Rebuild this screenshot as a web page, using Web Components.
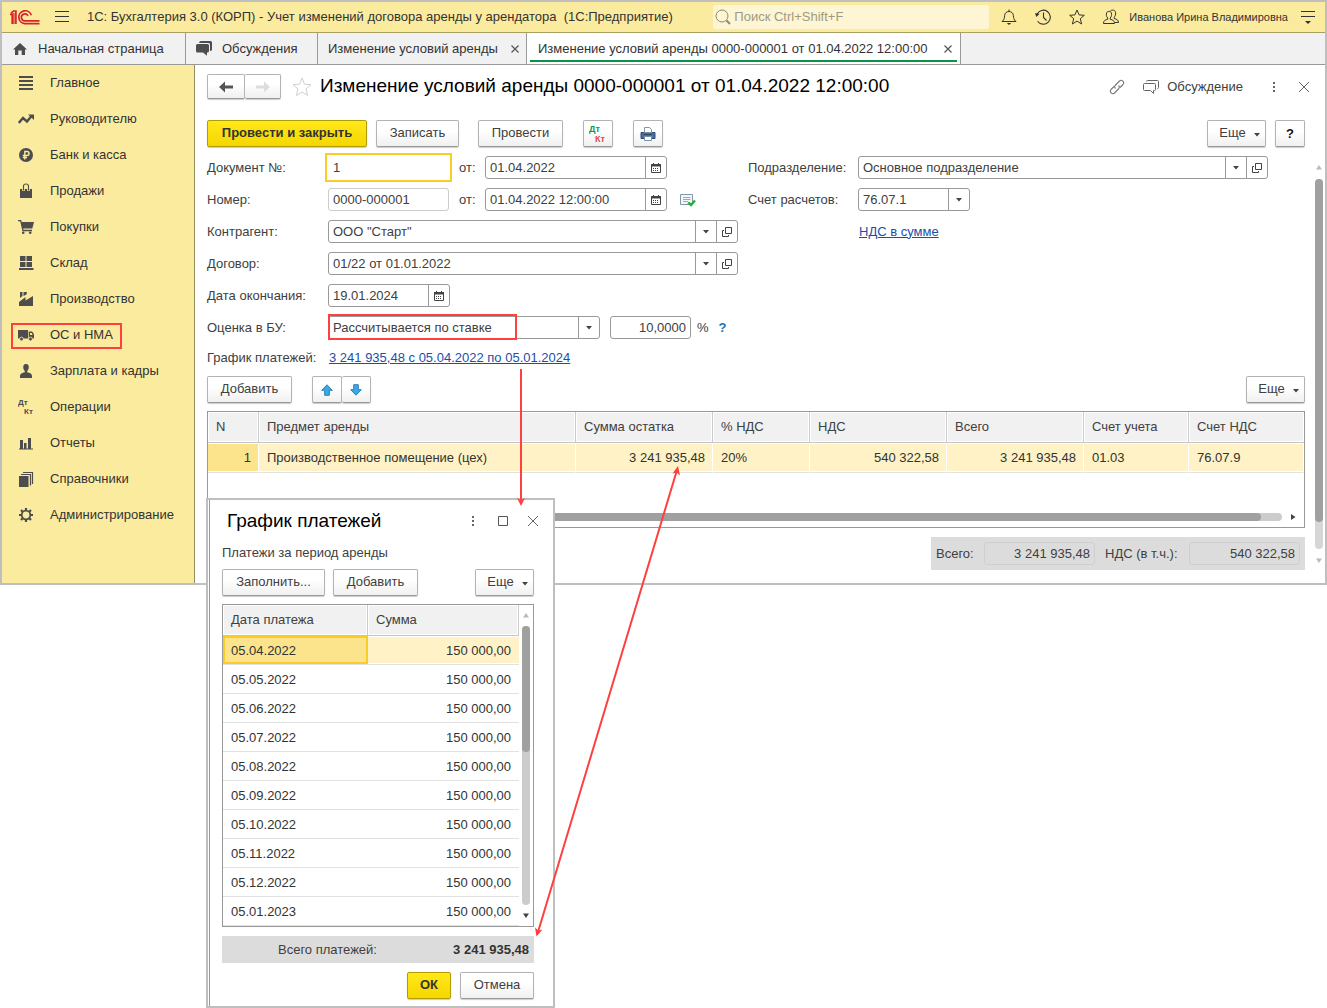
<!DOCTYPE html>
<html lang="ru">
<head>
<meta charset="utf-8">
<title>1С: Бухгалтерия 3.0 (КОРП)</title>
<style>
  body { margin: 0; min-height: 100vh; background: #fff; color: #404040; font: 13px/18px "Liberation Sans", Arial, sans-serif; position: relative; }
</style>
</head>
<body>
<app-window>
  <title-bar slot="title"></title-bar>
  <tab-strip slot="tabs">
    <app-tab style="--w:184px" icon="home">Начальная страница</app-tab>
    <app-tab style="--w:132px" icon="chats">Обсуждения</app-tab>
    <app-tab style="--w:209px" closable>Изменение условий аренды</app-tab>
    <app-tab style="--w:434px" closable active>Изменение условий аренды 0000-000001 от 01.04.2022 12:00:00</app-tab>
  </tab-strip>
  <side-nav slot="nav">
    <nav-item icon="lines">Главное</nav-item>
    <nav-item icon="trend">Руководителю</nav-item>
    <nav-item icon="ruble">Банк и касса</nav-item>
    <nav-item icon="bag">Продажи</nav-item>
    <nav-item icon="cart">Покупки</nav-item>
    <nav-item icon="store">Склад</nav-item>
    <nav-item icon="factory">Производство</nav-item>
    <nav-item icon="truck" marked>ОС и НМА</nav-item>
    <nav-item icon="person">Зарплата и кадры</nav-item>
    <nav-item icon="dtkt">Операции</nav-item>
    <nav-item icon="bars">Отчеты</nav-item>
    <nav-item icon="books">Справочники</nav-item>
    <nav-item icon="gear">Администрирование</nav-item>
  </side-nav>
  <lease-document></lease-document>
</app-window>
<payments-dialog></payments-dialog>
<callout-arrows></callout-arrows>

<script>
const D = '#4d4d4d';
const ICONS = {
  logo: [30, 15, `<g fill="none" stroke="#d8232a" stroke-width="1.7"><path d="M0 4.4H2.2V14M1 3.2L3.6 1H5.9V14" /><path d="M3.9 3V14" stroke-width="1.3"/><path d="M21.3 5.2A6.4 6.4 0 1 0 14.8 13.6H29.5"/><path d="M18 5.8A3.5 3.5 0 1 0 14.8 10.9H29.5"/></g>`],
  menu: [16, 16, `<path d="M1 2.5H15M1 7.5H15M1 12.5H15" stroke="#333" fill="none"/>`],
  search: [16, 16, `<g fill="none" stroke="#8f8a6c"><circle cx="7" cy="7" r="6"/><path d="M11.5 11.5L15 15" stroke-width="2"/></g>`],
  bell: [16, 16, `<path d="M1 12.5H15C12.6 10.6 12.6 9 12.4 6.6C12.2 4 10.4 2.5 8 2.5S3.8 4 3.6 6.6C3.4 9 3.4 10.6 1 12.5ZM8 .5V2.5" fill="none" stroke="#333"/><path d="M5.8 14H10.2L8 16Z" fill="#333"/>`],
  history: [16, 16, `<g fill="none" stroke="#333" stroke-width="1.1"><path d="M2 5.2A7 7 0 1 1 2.6 12.2M8.5 3.5V8.5L11.5 11.5"/></g><path d="M0 4.2L4.6 4.8 1.4 8Z" fill="#333"/>`],
  star: [16, 16, `<path d="M8 1L10.1 5.9L15.3 6.3L11.3 9.7L12.6 15L8 12.1L3.4 15L4.7 9.7L.7 6.3L5.9 5.9Z" fill="none" stroke="#333"/>`],
  starlight: [20, 20, `<path d="M10 1L12.5 7.2L19 7.7L14 11.9L15.6 18.5L10 15L4.4 18.5L6 11.9L1 7.7L7.5 7.2Z" fill="none" stroke="#d0d0d0"/>`],
  users: [16, 16, `<g fill="none" stroke="#333"><path d="M.5 14.5C.5 11.5 2 11 4.7 10.3V9C3 7 3.2 5.5 3.6 4C4.2 1.8 8 1.8 8.4 4C8.8 6 8.6 7.5 7.2 9V10.3C10 11 11.3 11.5 11.5 14.5Z"/><path d="M7.5 1.9C9.2.4 12.4 1 12.6 3.6C12.8 5.6 12.3 7 11.2 8.2V9.5C14 10.3 15.3 11 15.5 13.5H12"/></g>`],
  settings: [16, 16, `<path d="M1 2.5H15M1 7.5H15" stroke="#333"/><path d="M5 12H11L8 15Z" fill="#333"/>`],
  home: [16, 12, `<path d="M8 0L15 6.5H13V12H9.700V7.500H6.300V12H3V6.500H1Z" fill="${D}"/>`],
  chats: [16, 15, `<path d="M5 0H14.5Q16 0 16 1.5V8.5Q16 10 14 10V3.5Q14 2 12.5 2H3Q3.2 0 5 0Z" fill="${D}"/><path d="M1.5 3H11.5Q13 3 13 4.5V10Q13 11.5 11 11.5V14.8L7 11.5H1.5Q0 11.5 0 10V4.5Q0 3 1.5 3Z" fill="${D}"/>`],
  close: [8, 8, `<path d="M.5 .5L7.5 7.5M7.5 .5L.5 7.5" stroke="#555" stroke-width="1.2"/>`],
  x: [16, 16, `<path d="M3 3L13 13M13 3L3 13" stroke="#666"/>`],
  dots: [16, 16, `<path d="M7 3H9V5H7ZM7 7H9V9H7ZM7 11H9V13H7Z" fill="#666"/>`],
  max: [16, 16, `<path d="M3.5 3.5H12.5V12.5H3.5Z" fill="none" stroke="#555"/>`],
  link: [16, 16, `<g fill="none" stroke="#777" stroke-width="1.1"><path d="M6.5 9.500C5.200 8.300 5.500 7 6.500 6L10.500 2C12.800 0 16 3.200 14 5.500L11 8.500"/><path d="M9.500 6.500C10.800 7.700 10.500 9 9.500 10L5.500 14C3.200 16 0 12.800 2 10.500L5 7.500"/></g>`],
  discuss: [16, 16, `<g fill="none" stroke="#666"><path d="M1.5 4.5H11.5Q12.5 4.5 12.5 5.5V10.5Q12.5 11.5 11.5 11.5H10.5V14.5L7.5 11.5H1.5Q.5 11.5 .5 10.5V5.5Q.5 4.5 1.5 4.5Z"/><path d="M3.5 2.5Q3.5 1.5 4.5 1.5H14.5Q15.5 1.5 15.5 2.5V8.5Q15.5 9.5 14.5 9.5"/></g>`],
  back: [16, 12, `<path d="M1 6L7 .5V4.5H15V7.5H7V11.5Z" fill="#555"/>`],
  fwd: [16, 12, `<path d="M15 6L9 .5V4.5H1V7.5H9V11.5Z" fill="#ddd"/>`],
  lines: [16, 16, `<path d="M1 2H15M1 6H15M1 10H15M1 14H15" stroke="${D}" stroke-width="2"/>`],
  trend: [16, 16, `<path d="M.8 12L5 7L9 10.5L13.5 5" fill="none" stroke="${D}" stroke-width="2.4"/><path d="M10 3.5H16V9Z" fill="${D}"/>`],
  ruble: [16, 16, `<circle cx="8" cy="8" r="7" fill="${D}"/><path d="M6.8 12.5V4.5H9Q11 4.5 11 6.5T9 8.5H4.8M4.8 10.5H9" fill="none" stroke="#fbeb9e" stroke-width="1.4"/>`],
  bag: [16, 16, `<path d="M2 6H14V15H2Z" fill="${D}"/><path d="M5.5 8V3Q5.5 1 8 1T10.5 3V8" fill="none" stroke="#fbeb9e" stroke-width="2.6"/><path d="M5.5 7.5V3Q5.5 1 8 1T10.5 3V7.5" fill="none" stroke="${D}" stroke-width="1.1"/>`],
  cart: [16, 16, `<path d="M3 3H16L14.3 9.5H4.6Z" fill="${D}"/><path d="M0 1.6H2.7L5 11.5H14" fill="none" stroke="${D}" stroke-width="1.3"/><circle cx="5.2" cy="13.8" r="1.3" fill="${D}"/><circle cx="12.2" cy="13.8" r="1.3" fill="${D}"/>`],
  store: [16, 16, `<path d="M2 1H7.5V6H2ZM8.5 1H14V6H8.5ZM2 7H7.5V12H2ZM8.5 7H14V12H8.5ZM1 13H15.500V15H1Z" fill="${D}"/>`],
  factory: [16, 16, `<path d="M1 15V11L7.500 6V9.500L15 5V15Z" fill="${D}"/><path d="M2 1H4.500V5L2 7ZM5.500 1H9L8.500 3.500L5.500 5Z" fill="${D}"/>`],
  truck: [16, 16, `<path d="M0 3H10V11.500H0ZM10.700 4.500H14Q16 6 16 8V11.500H10.700Z" fill="${D}"/><path d="M12 6H13.700L14.600 8H12Z" fill="#fbeb9e"/><g fill="${D}" stroke="#fbeb9e" stroke-width=".8"><circle cx="3.500" cy="12" r="1.900"/><circle cx="12.500" cy="12" r="1.900"/></g>`],
  person: [16, 16, `<path d="M8 1C5.600 1 5 3 5.300 5C5.500 6.500 6.300 7.500 6.800 8V9.200C4 10 2 10.500 2 13V15H14V13C14 10.500 12 10 9.200 9.200V8C9.700 7.500 10.500 6.500 10.700 5C11 3 10.400 1 8 1Z" fill="${D}"/>`],
  dtkt: [16, 20, `<g font-family="Liberation Sans, sans-serif" font-weight="700" font-size="8" fill="${D}"><text x="0" y="8">Дт</text><text x="6" y="17">Кт</text></g>`],
  dtktc: [18, 21, `<g font-family="Liberation Sans, sans-serif" font-weight="700" font-size="9"><text x="0" y="9" fill="#16914a">Дт</text><text x="6" y="19" fill="#dd4b4b">Кт</text></g>`],
  bars: [16, 16, `<path d="M1 13.500H15V14.500H1ZM2 5H5V13.500H2ZM6 8H8.500V13.500H6ZM10 3H13V13.500H10Z" fill="${D}"/>`],
  books: [16, 16, `<path d="M1 5H10.500V16H1Z" fill="${D}"/><path d="M3 3.500H12.500V14.500M5 1.500H14.500V13" fill="none" stroke="${D}" stroke-width="1.200"/>`],
  gear: [16, 16, `<circle cx="8" cy="8" r="4.300" fill="none" stroke="${D}" stroke-width="1.800"/><path d="M8 1V4M8 12V15M1 8H4M12 8H15M3 3L5.200 5.200M10.800 10.800L13 13M13 3L10.800 5.200M5.200 10.800L3 13" stroke="${D}" stroke-width="2.200"/>`],
  print: [16, 16, `<path d="M1 6.500H15V12.500H1Z" fill="#4a6f97" stroke="#2f4f74"/><path d="M4.500 6.500V1.500H9.500L11.500 3.500V6.500Z" fill="#fff" stroke="#8095ad"/><path d="M4 8.500H12" stroke="#2b4868"/><path d="M4.500 10.500H11.500V14.500H4.500Z" fill="#fff" stroke="#7b93b0"/>`],
  up: [12, 12, `<path d="M6 .8L11.300 6.300H8.300V11.300H3.700V6.300H.7Z" fill="#38a9e6" stroke="#2b7fb5"/>`],
  down: [12, 12, `<path d="M6 11.200L11.300 5.700H8.300V.7H3.700V5.700H.7Z" fill="#38a9e6" stroke="#2b7fb5"/>`],
  cal: [10, 10, `<path d="M.5 1.500H9.500V9.500H.5Z" fill="#fff" stroke="#444"/><path d="M0 1H10V3.500H0Z" fill="#444"/><path d="M2.500 0V2M7.500 0V2" stroke="#444"/><path d="M2 5.500H8M2 7.500H8" stroke="#444" stroke-dasharray="1 1"/>`],
  caret: [6, 4, `<path d="M0 0H6L3 3.500Z" fill="#444"/>`],
  open: [10, 10, `<path d="M3.500 .500H9.500V6.500H3.500Z" fill="none" stroke="#444"/><path d="M2 3.500H.5V9.500H6.500V8" fill="none" stroke="#444"/>`],
  posted: [16, 14, `<path d="M.500 1.500H12.500V11.500H.500Z" fill="#f4f7fa" stroke="#8296ab"/><path d="M3 4.500H10.500M3 6.500H10.500M3 8.500H8" stroke="#9aaabb"/><path d="M8.200 9.500L11 12L15 7.500" fill="none" stroke="#27b13b" stroke-width="2.400"/>`],
  sup: [6, 5, `<path d="M3 0L6 4.500H0Z" fill="#bbb"/>`],
  sdown: [6, 5, `<path d="M3 5L6 .500H0Z" fill="var(--arrow,#bbb)"/>`],
  sright: [5, 6, `<path d="M0 0L4.500 3L0 6Z" fill="#444"/>`]
};
const icon = n => { const [w, h, b] = ICONS[n]; return `<svg class="ic" width="${w}" height="${h}" viewBox="0 0 ${w} ${h}" aria-hidden="true">${b}</svg>`; };
const BASE = `:host,*{box-sizing:border-box}svg{display:block;flex:none}button,input,select{font:inherit;color:inherit;margin:0}button{cursor:pointer}button.bare{border:0;background:none;padding:0;display:flex;align-items:center}a{color:#1a4fa8}`;

function define(name, css, html) {
  customElements.define(name, class extends HTMLElement {
    constructor() { super(); this.attachShadow({ mode: 'open' }); }
    connectedCallback() {
      this.shadowRoot.innerHTML = `<style>${BASE}${css}</style>` + (typeof html === 'function' ? html(this) : html);
    }
  });
}
const attr = (el, n, d = '') => el.getAttribute(n) ?? d;

define('app-window', `
  :host{display:block;border:2px solid #bfbfbf;background:#fff}
  .body{display:flex}
  main{flex:1;min-width:0}
`, `<slot name="title"></slot><slot name="tabs"></slot><div class="body"><slot name="nav"></slot><main><slot></slot></main></div>`);

define('title-bar', `
  :host{display:flex;align-items:center;height:31px;background:#fbeb9e;border-bottom:1px solid #a89f62;padding:0 9px 0 8px;color:#333}
  .burger{margin:0 17px 0 14px}
  .name{flex:1;white-space:pre;overflow:hidden}
  .search{display:flex;align-items:center;gap:3px;width:276px;height:24px;background:#fdf5d3;border-radius:2px;padding-left:2px;margin-right:12px}
  .search input{flex:1;min-width:0;border:0;background:none;padding:0;outline:0}
  .search input::placeholder{color:#a09b80;opacity:1}
  .tools{display:flex;gap:18px;margin-right:10px}
  .user{font-size:11px;margin-right:12px;white-space:nowrap}
`, `${icon('logo')}<button class="bare burger" aria-label="Меню">${icon('menu')}</button>
  <span class="name">1С: Бухгалтерия 3.0 (КОРП) - Учет изменений договора аренды у арендатора  (1С:Предприятие)</span>
  <label class="search">${icon('search')}<input type="search" placeholder="Поиск Ctrl+Shift+F" aria-label="Поиск"></label>
  <div class="tools"><button class="bare" aria-label="Уведомления">${icon('bell')}</button><button class="bare" aria-label="История">${icon('history')}</button><button class="bare" aria-label="Избранное">${icon('star')}</button><button class="bare" aria-label="Пользователи">${icon('users')}</button></div>
  <span class="user">Иванова Ирина Владимировна</span><button class="bare" aria-label="Настройки">${icon('settings')}</button>`);

define('tab-strip', `:host{display:flex;height:32px;background:#f1f1f1;border-bottom:1px solid #999}`, `<slot></slot>`);

define('app-tab', `
  :host{display:flex;width:var(--w);border-right:1px solid #999;padding:0 2px}
  :host([active]){background:#fff}
  .in{flex:1;display:flex;align-items:center;justify-content:space-between;padding:2px 5px 0 8px;white-space:nowrap;margin-bottom:2px}
  :host([active]) .in{border-bottom:2px solid #0a9447;margin:0 1px 2px;padding-top:4px}
  .t{display:flex;align-items:center;gap:10px;border:0;background:none;padding:0;color:#333}
`, el => `<div class="in"><button class="t">${el.hasAttribute('icon') ? icon(attr(el, 'icon')) : ''}<slot></slot></button>${el.hasAttribute('closable') ? `<button class="bare" aria-label="Закрыть вкладку">${icon('close')}</button>` : ''}</div>`);

define('side-nav', `:host{display:block;width:193px;flex:none;background:#fbeb9e;border-right:1px solid #958f60}`, `<nav><slot></slot></nav>`);

define('nav-item', `
  :host{display:block;position:relative}
  a{display:flex;align-items:center;gap:16px;height:36px;padding-left:16px;color:#333;text-decoration:none;white-space:nowrap}
  .mark{position:absolute;left:9px;top:6px;width:111px;height:26px;border:2px solid #ff4040}
`, el => `<a href="#">${icon(attr(el, 'icon'))}<slot></slot></a>${el.hasAttribute('marked') ? '<span class="mark"></span>' : ''}`);

define('tool-button', `
  :host{display:block;flex:none}
  button{display:flex;align-items:center;justify-content:center;gap:8px;height:27px;min-width:var(--w,30px);padding:0 4px 2px;border:1px solid #b3b3b3;border-bottom-color:#999;border-radius:2px;background:linear-gradient(#fff 40%,#f0f0f0);box-shadow:0 1px 1px #ccc;white-space:nowrap;color:#404040}
  :host([icon]) button{padding-bottom:0}
  :host([small]) button{height:25px}
  :host([primary]) button{background:linear-gradient(#ffe81a,#f5d600);border-color:#b39b00;font-weight:700;color:#333}
  :host([menu]) button{padding-left:10px}
  :host([menu]) .caret{margin-top:4px}
  :host([join]) button{border-left:0}
  :host([help]) button{font-weight:700;color:#111;padding-bottom:0}
`, el => `<button ${attr(el, 'name') ? `aria-label="${attr(el, 'name')}"` : ''}>${el.hasAttribute('icon') ? icon(attr(el, 'icon')) : ''}<slot></slot>${el.hasAttribute('menu') ? `<span class="caret">${icon('caret')}</span>` : ''}</button>`);

/* A labelled 1C field: plain text, date with a calendar button, or a drop-down with an optional open button. */
define('form-field', `
  :host{display:flex;align-items:center;height:23px}
  :host([grow]){flex:1}
  label{flex:none;width:var(--lw);white-space:nowrap}
  .box{position:relative;display:flex;height:23px;width:var(--w);border:1px solid #999;border-radius:3px;background:#fff}
  :host([grow]) .box{flex:1;width:auto}
  input,select{flex:1;min-width:0;width:100%;height:21px;border:0;background:none;padding:0 4px;outline:0;appearance:none;color:#404040;border-radius:0}
  :host([num]) input{text-align:right}
  .box>button{width:21px;border:0;border-left:1px solid #999;background:none;padding:0;display:grid;place-items:center}
  .pick{flex:1;display:grid;grid-template-columns:1fr 21px}
  .pick select{grid-area:1/1/2/3}
  .pick span{grid-area:1/2/2/3;border-left:1px solid #999;display:grid;place-items:center;pointer-events:none}
  :host([muted]) .box{border-color:#ccc}
  :host([total]) .box{border-color:#cfcfcf;background:none}
  :host([focus]) .box{border-color:transparent;outline:2px solid #fbcb26;outline-offset:1px;border-radius:0}
  .mark{position:absolute;left:-1px;top:-3px;width:189px;height:26px;border:2px solid #ff4040;pointer-events:none}
`, el => {
  const k = attr(el, 'kind', 'text'), v = attr(el, 'value').replace(/"/g, '&quot;');
  const aria = el.hasAttribute('name') ? `aria-label="${attr(el, 'name')}"` : '';
  return (el.hasAttribute('label') ? `<label for="c">${attr(el, 'label')}</label>` : '') + `<div class="box">` +
    (k === 'select' ? `<div class="pick"><select id="c" ${aria}><option>${v}</option></select><span>${icon('caret')}</span></div>` : `<input id="c" type="text" value="${v}" ${aria} ${el.hasAttribute('muted') || el.hasAttribute('total') ? 'readonly' : ''}>`) +
    (k === 'date' ? `<button aria-label="Выбрать дату">${icon('cal')}</button>` : '') +
    (el.hasAttribute('open') ? `<button aria-label="Открыть">${icon('open')}</button>` : '') +
    (el.hasAttribute('marked') ? '<span class="mark"></span>' : '') + `</div>`;
});

define('scroll-bar', `
  :host{display:flex;flex-direction:column;align-items:center;width:8px;flex:none}
  .track{flex:1;width:8px;border-radius:4px;background:var(--track,#d6d6d6);margin:var(--gap,8px) 0;display:flex;flex-direction:column}
  .thumb{height:var(--thumb);border-radius:4px;background:#a0a0a0}
`, `${icon('sup')}<div class="track"><div class="thumb"></div></div>${icon('sdown')}`);

const GRID = `
  table{border-collapse:separate;border-spacing:0;table-layout:fixed;width:100%;color:#333}
  th,td{padding:0 7px 0 8px;text-align:left;font-weight:400;white-space:nowrap;overflow:hidden}
  th{height:31px;background:#f1f1f1;border-right:1px solid #ccc;border-bottom:1px solid #c4c4c4;box-shadow:inset 0 0 0 1px #fff;color:#404040}
  td{border-bottom:1px solid #e2e2e2}
  th:last-child{border-right:0}
  .r{text-align:right}
  tr.sel td{background:#fef2c6;box-shadow:inset 0 1px #fff,inset 0 -1px #fff}
  tr.sel td:first-child{background:#fbe48c}
`;

define('lease-items', `${GRID}
  :host{display:flex;flex-direction:column;height:117px;border:1px solid #999}
  td{height:30px;border-right:1px solid #fff}
  .hs{margin-top:auto;display:flex;align-items:center;gap:9px;padding:0 8px 6px 12px}
  .track{flex:1;height:8px;border-radius:4px;background:#ccc;padding-right:21px}
  .thumb{height:8px;border-radius:4px;background:#a0a0a0}
`, `<table><colgroup><col style="width:51px"><col><col style="width:137px"><col style="width:97px"><col style="width:137px"><col style="width:137px"><col style="width:105px"><col style="width:115px"></colgroup>
  <thead><tr><th>N</th><th>Предмет аренды</th><th>Сумма остатка</th><th>% НДС</th><th>НДС</th><th>Всего</th><th>Счет учета</th><th>Счет НДС</th></tr></thead>
  <tbody><tr class="sel"><td class="r">1</td><td>Производственное помещение (цех)</td><td class="r">3 241 935,48</td><td>20%</td><td class="r">540 322,58</td><td class="r">3 241 935,48</td><td>01.03</td><td>76.07.9</td></tr></tbody></table>
  <div class="hs"><div class="track"><div class="thumb"></div></div>${icon('sright')}</div>`);

define('lease-document', `
  :host{display:block}
  header{display:flex;align-items:center;height:25px;margin:9px 13px 21px 12px}
  h1{font-size:19px;line-height:24px;font-weight:400;color:#000;margin:0 auto 0 8px;padding-bottom:2px;white-space:nowrap}
  .star{margin-left:11px}
  .bar{display:flex;margin:0 20px 9px 12px}
  .bar .end,.cmd .end{margin-left:auto;display:flex;gap:9px}
  .scroll{display:flex;gap:10px;padding:0 2px 0 12px}
  .content{flex:1;min-width:0;padding-bottom:13px}
  .cols{display:flex;gap:10px}
  .left{flex:none;width:531px;--lw:121px}
  .right{flex:1;padding-right:37px;--lw:110px}
  .left,.right{display:flex;flex-direction:column;gap:9px}
  .row{display:flex;align-items:center;gap:10px;height:23px}
  .from{--lw:26px}
  .nds{padding-left:111px}
  .sched{display:flex;margin:10px 0 9px}
  .sched span{width:122px}
  .cmd{display:flex;margin-bottom:8px}
  .totals{display:flex;gap:10px;width:374px;height:33px;align-items:center;background:#dcdcdc;margin:9px 0 0 auto;padding:0 5px}
  .pct{display:flex;gap:10px;margin-left:-4px}
  button.q{color:#1a72b8;font-weight:700}
  button.disc{gap:8px;margin:0 23px 0 18px}
`, `<header>
    <tool-button small icon="back" name="Назад" style="--w:38px"></tool-button><tool-button small join icon="fwd" name="Вперед" style="--w:36px"></tool-button>
    <button class="bare star" aria-label="В избранное">${icon('starlight')}</button>
    <h1>Изменение условий аренды 0000-000001 от 01.04.2022 12:00:00</h1>
    <button class="bare" aria-label="Ссылка">${icon('link')}</button>
    <button class="bare disc">${icon('discuss')}Обсуждение</button>
    <button class="bare" aria-label="Еще" style="margin-right:14px">${icon('dots')}</button>
    <button class="bare" aria-label="Закрыть">${icon('x')}</button>
  </header>
  <div class="bar">
    <tool-button primary style="--w:160px;margin-right:9px">Провести и закрыть</tool-button>
    <tool-button style="--w:83px;margin-right:19px">Записать</tool-button>
    <tool-button style="--w:85px;margin-right:20px">Провести</tool-button>
    <tool-button icon="dtktc" name="Проводки" style="margin-right:20px"></tool-button>
    <tool-button icon="print" name="Печать"></tool-button>
    <div class="end"><tool-button menu style="--w:59px">Еще</tool-button><tool-button help>?</tool-button></div>
  </div>
  <div class="scroll">
    <div class="content">
      <div class="cols">
        <div class="left">
          <div class="row"><form-field focus label="Документ №:" value="1" style="--w:121px"></form-field><form-field class="from" label="от:" kind="date" value="01.04.2022" style="--w:182px"></form-field></div>
          <div class="row"><form-field muted label="Номер:" value="0000-000001" style="--w:121px"></form-field><form-field class="from" label="от:" kind="date" value="01.04.2022 12:00:00" style="--w:182px"></form-field><span style="margin-left:3px">${icon('posted')}</span></div>
          <form-field label="Контрагент:" kind="select" open value='ООО "Старт"' style="--w:410px"></form-field>
          <form-field label="Договор:" kind="select" open value="01/22 от 01.01.2022" style="--w:410px"></form-field>
          <form-field label="Дата окончания:" kind="date" value="19.01.2024" style="--w:122px"></form-field>
          <div class="row"><form-field label="Оценка в БУ:" kind="select" marked value="Рассчитывается по ставке" style="--w:272px"></form-field><form-field num name="Ставка" value="10,0000" style="--w:81px"></form-field><span class="pct"><span>%</span><button class="bare q">?</button></span></div>
        </div>
        <div class="right">
          <form-field grow label="Подразделение:" kind="select" open value="Основное подразделение" style="flex:none"></form-field>
          <form-field label="Счет расчетов:" kind="select" value="76.07.1" style="--w:112px"></form-field>
          <div class="row nds"><a href="#">НДС в сумме</a></div>
        </div>
      </div>
      <div class="sched"><span>График платежей:</span><a href="#">3 241 935,48 с 05.04.2022 по 05.01.2024</a></div>
      <div class="cmd"><tool-button style="--w:85px;margin-right:20px">Добавить</tool-button><tool-button icon="up" name="Вверх"></tool-button><tool-button join icon="down" name="Вниз" style="--w:29px"></tool-button><div class="end"><tool-button menu style="--w:59px">Еще</tool-button></div></div>
      <lease-items></lease-items>
      <div class="totals"><form-field total num label="Всего:" value="3 241 935,48" style="--lw:48px;--w:111px"></form-field><form-field total num label="НДС (в т.ч.):" value="540 322,58" style="--lw:84px;--w:111px"></form-field></div>
    </div>
    <scroll-bar style="--thumb:343px;--gap:9px;padding:9px 0 20px"></scroll-bar>
  </div>`);

const DATES = ['05.04.2022', '05.05.2022', '05.06.2022', '05.07.2022', '05.08.2022', '05.09.2022', '05.10.2022', '05.11.2022', '05.12.2022', '05.01.2023'];
define('payments-dialog', `${GRID}
  :host{position:absolute;left:206px;top:498px;width:349px;border:2px solid #bfbfbf;background:#fff}
  section{border-left:1px solid #999;margin-left:1px;padding:8px 19px 7px 12px}
  header{display:flex;align-items:center;gap:14px;height:26px;margin:0 -7px 10px 5px}
  h2{font-size:19px;line-height:24px;font-weight:400;color:#000;margin:0 auto 0 0}
  p{margin:0 0 7px}
  .cmd{display:flex;gap:8px;margin-bottom:8px}
  .grid{display:flex;border:1px solid #999}
  .grid scroll-bar{margin:0 3px;padding:8px 0}
  .t{flex:1}
  td{height:29px;padding:2px 8px 0}
  th:last-child{border-right:1px solid #ccc}
  tr.sel td:first-child{box-shadow:inset 0 0 0 2px #fbcb26}
  .sum{display:flex;justify-content:space-between;align-items:center;height:27px;background:#dcdcdc;margin:9px 0;padding:0 5px 0 56px}
  .sum b{color:#333}
  footer{display:flex;justify-content:flex-end;gap:9px}
`, `<section role="dialog" aria-label="График платежей">
  <header><h2>График платежей</h2><button class="bare" aria-label="Еще">${icon('dots')}</button><button class="bare" aria-label="Развернуть">${icon('max')}</button><button class="bare" aria-label="Закрыть">${icon('x')}</button></header>
  <p>Платежи за период аренды</p>
  <div class="cmd"><tool-button style="--w:103px">Заполнить...</tool-button><tool-button style="--w:85px">Добавить</tool-button><tool-button menu style="--w:59px;margin-left:auto">Еще</tool-button></div>
  <div class="grid"><div class="t"><table><colgroup><col style="width:145px"><col></colgroup><thead><tr><th>Дата платежа</th><th>Сумма</th></tr></thead><tbody>${DATES.map((d, i) => `<tr${i ? '' : ' class="sel"'}><td>${d}</td><td class="r">150 000,00</td></tr>`).join('')}</tbody></table></div><scroll-bar style="--thumb:126px;--track:#ccc;--arrow:#444"></scroll-bar></div>
  <div class="sum"><span>Всего платежей:</span><b>3 241 935,48</b></div>
  <footer><tool-button primary style="--w:44px">ОК</tool-button><tool-button style="--w:74px">Отмена</tool-button></footer>
</section>`);

define('callout-arrows', `:host{position:absolute;left:0;top:0;pointer-events:none}`,
  `<svg width="700" height="940" viewBox="0 0 700 940" fill="none" stroke="#ff4040" stroke-width="2" aria-hidden="true">
    <path d="M521 369V503M538 932L677 470"/>
    <g fill="#ff4040" stroke="none"><path d="M521 506L517 498L521 500L525 498Z"/><path d="M678 466L672.500 473.500L676.600 472.500L680 475.500Z"/><path d="M536.500 936.500L535 927.500L538.500 930.500L542.500 929.500Z"/></g>
  </svg>`);
</script>
</body>
</html>
